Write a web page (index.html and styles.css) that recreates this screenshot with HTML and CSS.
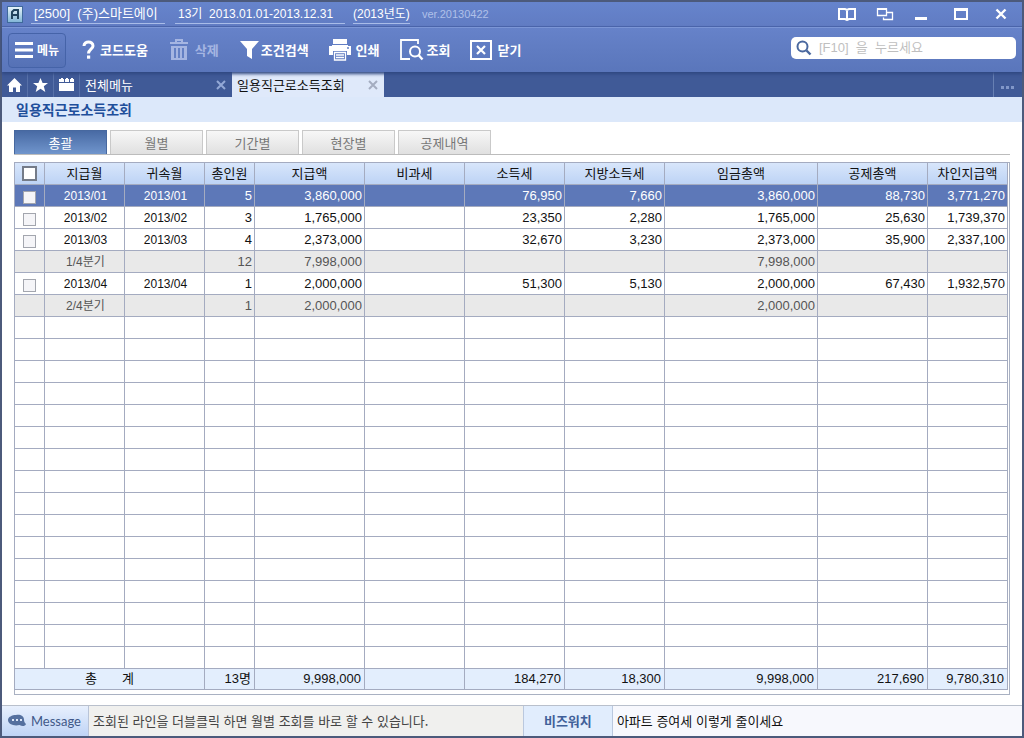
FILE: index.html
```html
<!DOCTYPE html>
<html lang="ko">
<head>
<meta charset="utf-8">
<title>일용직근로소득조회</title>
<link rel="stylesheet" href="styles.css">
</head>
<body>
<div class="window">
  <header class="titlebar">
    <svg class="app-logo" width="16" height="17" viewBox="0 0 16 17" aria-hidden="true">
      <defs><linearGradient id="lg" x1="0" y1="0" x2="0" y2="1"><stop offset="0" stop-color="#eaf6fb"/><stop offset="1" stop-color="#7fb4d6"/></linearGradient></defs>
      <rect x=".5" y=".5" width="15" height="16" fill="url(#lg)" stroke="#3f699b"/>
      <path d="M5 13V6L7 4H11V13M5 9H11" fill="none" stroke="#21445f" stroke-width="2"/>
    </svg>
    <a class="crumb crumb-company" href="#">[2500]&nbsp; (주)스마트에이</a>
    <a class="crumb crumb-term" href="#">13기&nbsp; 2013.01.01-2013.12.31</a>
    <a class="crumb crumb-year" href="#">(2013년도)</a>
    <span class="version">ver.20130422</span>
    <div class="window-controls">
      <button type="button" aria-label="도움말"><svg width="18" height="14" viewBox="0 0 18 14"><path d="M1 2H7L9 3L11 2H17V12H11L9 13L7 12H1ZM9 3V13" fill="none" stroke="#fff" stroke-width="2"/></svg></button>
      <button type="button" aria-label="창 배열"><svg width="18" height="14" viewBox="0 0 18 14"><path d="M1.500 2H10.500V8.500H1.500ZM11 5.500H16.500V12.500H7.500V10.500" fill="none" stroke="#fff" stroke-width="1.300"/><path d="M1 2H11" stroke="#fff" stroke-width="2"/></svg></button>
      <button type="button" aria-label="최소화"><svg width="14" height="14" viewBox="0 0 14 14"><path d="M1 11.500H13" stroke="#fff" stroke-width="3"/></svg></button>
      <button type="button" aria-label="최대화"><svg width="14" height="14" viewBox="0 0 14 14"><path d="M1 1V13M13 1V13M0 12H14" fill="none" stroke="#fff" stroke-width="2"/><path d="M0 2.500H14" stroke="#fff" stroke-width="3"/></svg></button>
      <button type="button" aria-label="창 닫기"><svg width="14" height="14" viewBox="0 0 14 14"><path d="M2.500 2.500L11.500 11.500M11.500 2.500L2.500 11.500" stroke="#fff" stroke-width="2.400"/></svg></button>
    </div>
  </header>

  <div class="toolbar">
    <button type="button" class="tool tool-menu"><svg width="18" height="16" viewBox="0 0 18 16"><path d="M0 1.500H18M0 8H18M0 14.500H18" stroke="#fff" stroke-width="2.800"/></svg>메뉴</button>
    <button type="button" class="tool tool-help"><svg width="13" height="20" viewBox="0 0 13 20"><path d="M2 6C2 0.500 11 0.500 11 6C11 9 6.500 9.500 6.500 13.500" fill="none" stroke="#fff" stroke-width="3"/><rect x="5" y="15.500" width="3.200" height="3.200" fill="#fff"/></svg>코드도움</button>
    <button type="button" class="tool tool-delete" disabled><svg width="18" height="22" viewBox="0 0 18 22"><path d="M6 3V1H12V3M0 4H18" fill="none" stroke="#a5b5e2" stroke-width="2"/><path d="M1 7H17V21H1Z" fill="#a5b5e2"/><path d="M5 9V19M9 9V19M13 9V19" stroke="#6480c4" stroke-width="2"/></svg>삭제</button>
    <button type="button" class="tool tool-filter"><svg width="19" height="18" viewBox="0 0 19 18"><path d="M0 0H19L12 8V18L7 15V8Z" fill="#fff"/></svg>조건검색</button>
    <button type="button" class="tool tool-print"><svg width="22" height="22" viewBox="0 0 22 22"><path d="M4 0H18V5H4ZM0 7H3V6H19V7H22V16H18V12H4V16H0Z" fill="#fff"/><path d="M5.500 13.500H16.500V21H5.500ZM7 16H15M7 18.500H15" fill="none" stroke="#fff" stroke-width="1.300"/><circle cx="19" cy="9" r="1" fill="#6480c4"/></svg>인쇄</button>
    <button type="button" class="tool tool-lookup"><svg width="24" height="22" viewBox="0 0 24 22"><path d="M10 20H1V1H18V5" fill="none" stroke="#fff" stroke-width="1.800"/><circle cx="15" cy="12.500" r="5" fill="none" stroke="#fff" stroke-width="2"/><path d="M18.500 16L22.500 20.500" stroke="#fff" stroke-width="2.400"/></svg>조회</button>
    <button type="button" class="tool tool-close"><svg width="22" height="20" viewBox="0 0 22 20"><path d="M1 1H21V19H1Z" fill="none" stroke="#fff" stroke-width="2"/><path d="M7 6L15 14M15 6L7 14" stroke="#fff" stroke-width="2.200"/></svg>닫기</button>
    <label class="search">
      <svg width="16" height="16" viewBox="0 0 16 16" aria-hidden="true"><circle cx="6.500" cy="6.500" r="5" fill="none" stroke="#4a689f" stroke-width="2"/><path d="M10.500 10.500L14.500 14.500" stroke="#4a689f" stroke-width="2.400"/></svg>
      <input type="text" aria-label="메뉴 검색" placeholder="[F10]&nbsp; 을&nbsp; 누르세요">
    </label>
  </div>

  <nav class="docbar">
    <button type="button" class="doc-icon" aria-label="홈"><svg width="15" height="14" viewBox="0 0 15 14"><path d="M7.500 0L15 7.500H13V14H9V9.500H6V14H2V7.500H0Z" fill="#fff"/></svg></button>
    <button type="button" class="doc-icon" aria-label="즐겨찾기"><svg width="15" height="14" viewBox="0 0 15 14"><path d="M7.500 0L9.600 5H15L10.800 8.300L12.300 14L7.500 10.800L2.700 14L4.200 8.300L0 5H5.400Z" fill="#fff"/></svg></button>
    <button type="button" class="doc-icon" aria-label="일정"><svg width="15" height="13" viewBox="0 0 15 13"><path d="M0 1H2V0H4V1H5V4H0ZM6 1H7V0H9V1H10V4H6ZM11 1H12V0H14V1H15V4H11ZM0 5H15V13H0Z" fill="#fff"/></svg></button>
    <div class="doc-tab"><a href="#">전체메뉴</a><button type="button" aria-label="전체메뉴 닫기"><svg width="10" height="10" viewBox="0 0 10 10"><path d="M1 1L9 9M9 1L1 9" stroke="#93a8d6" stroke-width="2"/></svg></button></div>
    <div class="doc-tab doc-tab-active"><a href="#">일용직근로소득조회</a><button type="button" aria-label="일용직근로소득조회 닫기"><svg width="10" height="10" viewBox="0 0 10 10"><path d="M1 1L9 9M9 1L1 9" stroke="#a4adc0" stroke-width="2"/></svg></button></div>
    <button type="button" class="doc-more" aria-label="더보기"><svg width="14" height="3" viewBox="0 0 14 3"><path d="M0 0H3V3H0ZM5 0H8V3H5ZM10 0H13V3H10Z" fill="#8197c8"/></svg></button>
  </nav>

  <h1 class="page-title">일용직근로소득조회</h1>

  <main class="content">
    <div class="views">
      <button type="button" class="view view-active">총괄</button>
      <button type="button" class="view">월별</button>
      <button type="button" class="view">기간별</button>
      <button type="button" class="view">현장별</button>
      <button type="button" class="view">공제내역</button>
    </div>
    <div class="grid-frame">
      <table class="grid">
        <colgroup><col class="w30"><col class="w80"><col class="w80"><col class="w50"><col class="w110"><col class="w100"><col class="w100"><col class="w100"><col><col class="w110"><col class="w80"></colgroup>
        <thead>
          <tr><th><input type="checkbox" class="check check-all" aria-label="전체 선택"></th><th>지급월</th><th>귀속월</th><th>총인원</th><th>지급액</th><th>비과세</th><th>소득세</th><th>지방소득세</th><th>임금총액</th><th>공제총액</th><th>차인지급액</th></tr>
        </thead>
        <tbody>
          <tr class="selected"><td><input type="checkbox" class="check" aria-label="2013/01 선택"></td><td class="date">2013/01</td><td class="date">2013/01</td><td>5</td><td>3,860,000</td><td></td><td>76,950</td><td>7,660</td><td>3,860,000</td><td>88,730</td><td>3,771,270</td></tr>
          <tr><td><input type="checkbox" class="check" aria-label="2013/02 선택"></td><td class="date">2013/02</td><td class="date">2013/02</td><td>3</td><td>1,765,000</td><td></td><td>23,350</td><td>2,280</td><td>1,765,000</td><td>25,630</td><td>1,739,370</td></tr>
          <tr><td><input type="checkbox" class="check" aria-label="2013/03 선택"></td><td class="date">2013/03</td><td class="date">2013/03</td><td>4</td><td>2,373,000</td><td></td><td>32,670</td><td>3,230</td><td>2,373,000</td><td>35,900</td><td>2,337,100</td></tr>
          <tr class="quarter"><td></td><td class="date">1/4분기</td><td></td><td>12</td><td>7,998,000</td><td></td><td></td><td></td><td>7,998,000</td><td></td><td></td></tr>
          <tr><td><input type="checkbox" class="check" aria-label="2013/04 선택"></td><td class="date">2013/04</td><td class="date">2013/04</td><td>1</td><td>2,000,000</td><td></td><td>51,300</td><td>5,130</td><td>2,000,000</td><td>67,430</td><td>1,932,570</td></tr>
          <tr class="quarter"><td></td><td class="date">2/4분기</td><td></td><td>1</td><td>2,000,000</td><td></td><td></td><td></td><td>2,000,000</td><td></td><td></td></tr>
          <tr><td><td><td><td><td><td><td><td><td><td><td></tr>
          <tr><td><td><td><td><td><td><td><td><td><td><td></tr>
          <tr><td><td><td><td><td><td><td><td><td><td><td></tr>
          <tr><td><td><td><td><td><td><td><td><td><td><td></tr>
          <tr><td><td><td><td><td><td><td><td><td><td><td></tr>
          <tr><td><td><td><td><td><td><td><td><td><td><td></tr>
          <tr><td><td><td><td><td><td><td><td><td><td><td></tr>
          <tr><td><td><td><td><td><td><td><td><td><td><td></tr>
          <tr><td><td><td><td><td><td><td><td><td><td><td></tr>
          <tr><td><td><td><td><td><td><td><td><td><td><td></tr>
          <tr><td><td><td><td><td><td><td><td><td><td><td></tr>
          <tr><td><td><td><td><td><td><td><td><td><td><td></tr>
          <tr><td><td><td><td><td><td><td><td><td><td><td></tr>
          <tr><td><td><td><td><td><td><td><td><td><td><td></tr>
          <tr><td><td><td><td><td><td><td><td><td><td><td></tr>
          <tr><td><td><td><td><td><td><td><td><td><td><td></tr>
        </tbody>
        <tfoot>
          <tr><th colspan="3"><div class="total-label"><span>총</span><span>계</span></div></th><td>13명</td><td>9,998,000</td><td></td><td>184,270</td><td>18,300</td><td>9,998,000</td><td>217,690</td><td>9,780,310</td></tr>
        </tfoot>
      </table>
    </div>
  </main>

  <footer class="statusbar">
    <div class="status-label"><svg width="18" height="14" viewBox="0 0 18 14" aria-hidden="true"><path d="M8 1C12 0 16 2 16 5.500C16 7 16.500 9 18 10C17 12.500 14 12.500 11.500 11C6 12.500 0 10 0 6C0 3 4 1 8 1Z" fill="#55709f"/><path d="M4 5H6V7H4ZM8 5H10V7H8ZM12 5H14V7H12Z" fill="#dce6f7"/></svg>Message</div>
    <div class="status-text">조회된 라인을 더블클릭 하면 월별 조회를 바로 할 수 있습니다.</div>
    <div class="biz-label">비즈워치</div>
    <a class="biz-text" href="#">아파트 증여세 이렇게 줄이세요</a>
  </footer>
</div>
</body>
</html>
```
FILE: styles.css
```css
* { box-sizing: border-box; }
body {
  margin: 0;
  font: 13px/16px "Noto Sans CJK KR", sans-serif;
  color: #111;
}
button {
  margin: 0;
  padding: 0;
  border: 0;
  background: none;
  color: inherit;
  font: inherit;
}
a { color: inherit; text-decoration: none; }
svg { display: block; flex: none; }

.window {
  display: flex;
  flex-direction: column;
  min-height: 100vh;
  border: 2px solid #4c5a7b;
  background: #fff;
}

.titlebar {
  display: flex;
  align-items: center;
  height: 25px;
  padding: 0 14px 0 5px;
  border-bottom: 1px solid #4c67ac;
  background: linear-gradient(#6684cc, #617cc3);
  color: #fff;
  font-family: "Liberation Sans", "Noto Sans CJK KR", sans-serif;
  font-size: 12px;
  white-space: nowrap;
}
.app-logo { margin-right: 8px; }
.crumb {
  padding: 0 3px;
  border-bottom: 1px solid #a9bce8;
  line-height: 18px;
}
.crumb-company { min-width: 134px; margin-right: 10px; font-size: 13px; }
.crumb-term { min-width: 170px; margin-right: 8px; }
.crumb-year { padding: 0; min-width: 57px; }
.version { margin-left: 12px; color: #b0c0e8; font-size: 11px; }
.window-controls { display: flex; gap: 20px; margin-left: auto; }
.window-controls button:nth-child(n+3):nth-child(-n+4) { margin-right: 6px; }

.toolbar {
  display: flex;
  align-items: center;
  height: 45px;
  padding: 0 6px;
  border-top: 1px solid #7c96d6;
  background: linear-gradient(#6682c9, #5a76bb);
  box-shadow: 0 2px 3px #2f4780;
  color: #fff;
  position: relative;
}
.tool {
  display: flex;
  align-items: center;
  gap: 5px;
  font-weight: bold;
  white-space: nowrap;
}
.tool-menu {
  height: 35px;
  width: 58px;
  padding: 0 6px;
  gap: 4px;
  border: 1px solid #4563a8;
  border-radius: 4px;
  background: linear-gradient(#6480c7, #5571b5);
  font-size: 12px;
}
.tool-help { margin-left: 16px; }
.tool-delete { margin-left: 22px; gap: 7px; color: #a5b5e2; }
.tool-filter { margin-left: 21px; gap: 2px; }
.tool-print { margin-left: 20px; }
.tool-lookup { margin-left: 20px; gap: 3px; }
.tool-close { margin-left: 20px; }
.search {
  display: flex;
  align-items: center;
  gap: 7px;
  width: 225px;
  height: 22px;
  margin: 0 0 4px auto;
  padding: 0 5px;
  border-radius: 5px;
  background: #fff;
}
.search input {
  flex: 1;
  min-width: 0;
  padding: 0;
  border: 0;
  outline: 0;
  background: none;
  font: 13px/16px "Liberation Sans", "Noto Sans CJK KR", sans-serif;
}
.search input::placeholder { color: #bfbfbf; opacity: 1; }

.docbar {
  display: flex;
  height: 25px;
  background: #405a97;
  color: #fff;
}
.doc-icon {
  display: flex;
  align-items: center;
  justify-content: center;
  width: 26px;
  border-right: 1px solid #5871a9;
}
.doc-tab {
  display: flex;
  align-items: center;
  justify-content: space-between;
  width: 152px;
  padding: 0 6px 0 5px;
}
.doc-tab-active { background: #dfe9fa; color: #111; }
.doc-more {
  display: flex;
  align-items: center;
  justify-content: center;
  width: 29px;
  margin-left: auto;
  padding-top: 6px;
  border-left: 1px solid #6780b3;
}

.page-title {
  margin: 0;
  padding: 0 14px;
  background: #dce8fa;
  color: #1f4f9b;
  font-size: 14px;
  line-height: 25px;
}

.content { flex: 1; padding: 8px 12px 10px; }
.views {
  display: flex;
  gap: 3px;
  border-bottom: 1px solid #bcbcbc;
}
.view {
  width: 93px;
  height: 24px;
  border: 1px solid #c9c9c9;
  border-bottom: 0;
  background: linear-gradient(#f7f7f7, #e0e0e0);
  color: #777;
}
.view-active {
  border-color: #47689f;
  background: linear-gradient(#486aa4, #7095cc);
  color: #fff;
}

.grid-frame {
  margin-top: 7px;
  padding: 0 1px 4px 0;
  border: solid #a9b1c2;
  border-width: 0 1px 1px 0;
  box-shadow: inset 1px 0 #a9b1c2, inset 0 1px #a9b1c2;
}
.grid {
  width: 100%;
  table-layout: fixed;
  border: solid #a4abc0;
  border-width: 1px 0 0 1px;
  border-spacing: 0;
  font-family: "Liberation Sans", "Noto Sans CJK KR", sans-serif;
}
.w30 { width: 30px; }
.w50 { width: 50px; }
.w80 { width: 80px; }
.w100 { width: 100px; }
.w110 { width: 110px; }
.grid th, .grid td {
  height: 22px;
  padding: 0 2px;
  border: solid #a4abc0;
  border-width: 0 1px 1px 0;
  font-weight: normal;
  text-align: right;
  line-height: 16px;
  white-space: nowrap;
}
.grid thead th {
  background: linear-gradient(#d8e6fb, #bdd3f5);
  text-align: center;
}
.grid td:first-child, .grid .date { text-align: center; }
.grid .date { padding: 0 0 0 2px; font-size: 12px; }
.selected { background: #5d78b8; color: #fff; }
.quarter { background: #e9e9e9; color: #555; }
.grid tfoot th, .grid tfoot td {
  height: 21px;
  padding: 0 3px;
  background: #e3eefd;
}
.total-label { display: flex; justify-content: center; gap: 25px; }
.check {
  appearance: none;
  display: block;
  width: 13px;
  height: 13px;
  margin: 4px auto 0;
  border: 1px solid #a3a6ae;
  background: #f5f5f8;
}
.check-all {
  width: 15px;
  height: 15px;
  margin: 0 auto;
  border: 2px solid #747b88;
  background: #fff;
}

.statusbar {
  display: flex;
  height: 31px;
  border-top: 1px solid #b9c0cc;
  background: #f7f8fd;
  line-height: 30px;
  white-space: nowrap;
}
.status-label {
  display: flex;
  align-items: center;
  gap: 5px;
  width: 87px;
  padding-left: 6px;
  border-right: 1px solid #b9c4d8;
  background: linear-gradient(#e8f0fd, #bfd4f6);
  color: #3f5888;
  font-family: Lato, sans-serif;
  font-size: 13px;
}
.status-text {
  flex: 434 1 0;
  padding-left: 4px;
  background: #f0f0ee;
  color: #444;
}
.biz-label {
  width: 90px;
  border: solid #bac8de;
  border-width: 0 1px;
  background: #e1edfd;
  color: #3f5f99;
  font-weight: bold;
  text-align: center;
}
.biz-text { flex: 409 1 0; padding-left: 4px; }
```
